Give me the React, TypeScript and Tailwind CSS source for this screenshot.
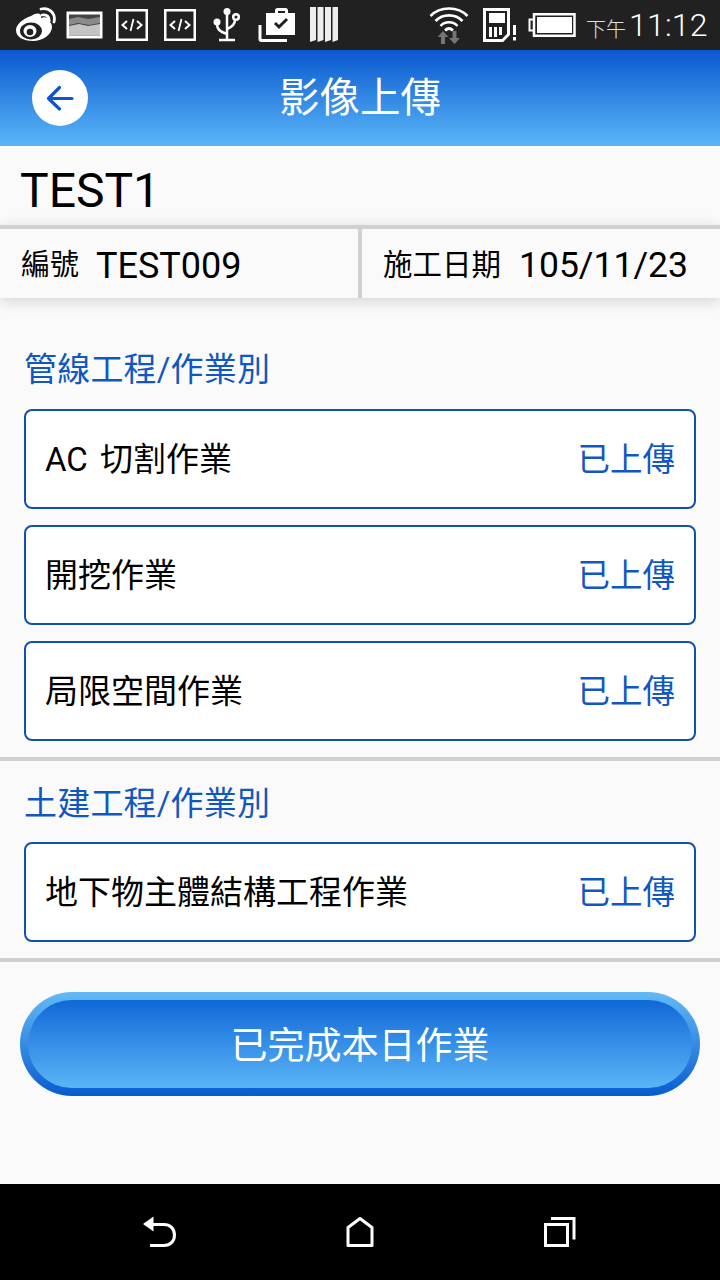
import React from "react";

const FONT = "font-['Roboto','Noto_Sans_CJK_TC',sans-serif]";

function CodeBox({ className = "" }: { className?: string }) {
  return (
    <svg width="32" height="32" viewBox="0 0 32 32" className={className} fill="none" stroke="#fff">
      <rect x="1.25" y="1.25" width="29.500" height="29.500" strokeWidth="2.500" />
      <path d="M11 12l-4.500 4 4.500 4M21 12l4.500 4-4.500 4" strokeWidth="2" />
      <path d="M17.500 10l-3 12" strokeWidth="1.800" />
    </svg>
  );
}

function Weibo() {
  return (
    <svg width="40" height="36" viewBox="0 0 40 36">
      <path d="M15 9C21 5 26 6 25 11c5-2 9 0 8 4 3 1 3 4 3 5 0 7-9 14-19 14C7 34 0 30 0 23 0 18 6 12 15 9z" fill="#fff" />
      <ellipse cx="15" cy="24" rx="11" ry="8.500" fill="#212121" />
      <ellipse cx="14" cy="24" rx="6.500" ry="6" fill="#fff" />
      <circle cx="14" cy="25" r="3.300" fill="#212121" />
      <path d="M26 8c5-1 8 2 7 7M25 2c9-2 15 5 13 13" fill="none" stroke="#fff" strokeWidth="2.800" strokeLinecap="round" />
    </svg>
  );
}

function StatusBar() {
  return (
    <div className="h-[50px] bg-[#212121] flex items-center shrink-0 pl-[16px]">
      <Weibo />
      <svg width="37" height="28" viewBox="0 0 37 28" className="ml-[10px]">
        <rect x="0.500" y="0.500" width="36" height="27" fill="#fff" />
        <rect x="3" y="3.500" width="31" height="21" fill="#444" />
        <path d="M3 8l9-2 10 2 12-2v6l-11 2-11-2-9 2z" fill="#8a8a8a" />
        <path d="M3 15l10-2 9 2 12-2v11.500H3z" fill="#c4c4c4" />
      </svg>
      <CodeBox className="ml-[13px]" />
      <CodeBox className="ml-[16px]" />
      <svg width="28" height="36" viewBox="0 0 28 36" className="ml-[17px]" fill="none" stroke="#fff" strokeWidth="2.500">
        <circle cx="14" cy="4.500" r="3.500" fill="#fff" stroke="none" />
        <path d="M14 6v27M6 33h16" />
        <circle cx="4" cy="15" r="3.500" fill="#fff" stroke="none" />
        <path d="M4 17c0 6 4 8 10 10" />
        <circle cx="23" cy="10" r="2.800" />
        <path d="M22 13c0 5-3 7-8 9" />
      </svg>
      <svg width="37" height="34" viewBox="0 0 37 34" className="ml-[17px]">
        <path d="M8 5h29v22H8z" fill="#fff" />
        <path d="M17 5V2.500C17 1 18 0 19.500 0h8C29 0 30 1 30 2.500V5h-3V3h-7v2z" fill="#fff" />
        <path d="M17 15l4 4 8-8" fill="none" stroke="#212121" strokeWidth="3" />
        <path d="M2 17v14c0 .8 .7 1.500 1.500 1.500H29" fill="none" stroke="#fff" strokeWidth="3" />
      </svg>
      <svg width="28" height="36" viewBox="0 0 28 36" className="ml-[15px]">
        <path d="M0 0h6v33l-6 2zM7.500 0h6v33l-6 2zM15 0h6v33l-6 2zM22.500 0h5.500v33l-5.500 2z" fill="#eee" />
      </svg>
      <svg width="40" height="40" viewBox="0 0 40 40" className="ml-[91px]" fill="none" stroke="#fff" strokeWidth="2.600">
        <path d="M1.500 11C11 1 29 1 38.500 11M6.500 16C13.500 8.500 26.500 8.500 33.500 16M11.500 21C16 16 24 16 28.500 21M16 25.500c2.500-2.500 5.500-2.500 8 0" />
        <path d="M14 26l5.500 6h-3.500v7h-4v-7H8.500zM25.500 39l-5.500-6h3.500v-7h4v7H31z" fill="#757575" stroke="none" />
      </svg>
      <svg width="34" height="34" viewBox="0 0 34 34" className="ml-[14px]">
        <path d="M1.500 1.500h24v25l-6 6h-18z" fill="none" stroke="#fff" strokeWidth="3" />
        <rect x="6" y="5" width="16" height="10" fill="#fff" />
        <path d="M6 19h3v10H6zM11 19h3v10h-3zM16 19h3v8h-3z" fill="#fff" />
        <path d="M30 17h3v10h-3zM30 29h3v3.500h-3z" fill="#fff" />
      </svg>
      <svg width="48" height="24" viewBox="0 0 48 24" className="ml-[11px]">
        <path d="M5.500 6.500H1.500v11h4" fill="none" stroke="#fff" strokeWidth="2" />
        <rect x="6" y="1.250" width="40.500" height="21.500" fill="none" stroke="#fff" strokeWidth="2.500" />
        <rect x="9" y="4" width="35" height="16" fill="#fff" />
      </svg>
      <div className="ml-[10px] flex items-end text-white leading-none">
        <span className="text-[20px] font-light text-[#e0e0e0] mb-[1px]">下午</span>
        <span className="text-[32px] font-light ml-[3px] tracking-[0.2px]">11:12</span>
      </div>
    </div>
  );
}

function Header() {
  return (
    <div className="h-[96px] shrink-0 bg-gradient-to-b from-[#0a58cf] to-[#5bb6f7] flex items-center pl-[32px]">
      <div className="w-[56px] h-[56px] rounded-full bg-white flex items-center justify-center">
        <svg width="28" height="28" viewBox="0 0 28 28" fill="none" stroke="#0f55c8" strokeWidth="3.200" strokeLinecap="round" strokeLinejoin="round">
          <path d="M26 14.500H3M13.500 3.500L2.500 14.500 13.500 25" />
        </svg>
      </div>
      <div className="flex-1 text-center pr-[88px] text-white text-[40.500px] leading-none">影像上傳</div>
    </div>
  );
}

function Row({ label }: { label: string }) {
  return (
    <div className="h-[100px] border-2 border-[#0f52ad] rounded-[8px] bg-white flex items-center justify-between px-[19px]">
      <span className="text-[33px] text-black leading-none [word-spacing:4px]">{label}</span>
      <span className="text-[32.500px] text-[#1058c0] leading-none pt-[2px]">已上傳</span>
    </div>
  );
}

export default function App() {
  return (
    <div className={`${FONT} w-[720px] h-[1280px] flex flex-col bg-[#fafafa] overflow-hidden`}>
      <StatusBar />
      <Header />
      <div className="h-[79px] shrink-0 flex items-center pl-[20px] pt-[11px] text-[48px] leading-none text-black">TEST1</div>
      <div className="h-[73px] shrink-0 border-t-4 border-[#d0d0d0] flex shadow-[0_3px_14px_rgba(0,0,0,0.16)] z-10 bg-[#fafafa]">
        <div className="w-[362px] flex items-center pl-[21px] pt-[4px] border-r-4 border-[#d0d0d0] text-black leading-none">
          <span className="text-[29px]">編號</span>
          <span className="text-[36px] ml-[17px]">TEST009</span>
        </div>
        <div className="flex-1 flex items-center pl-[21px] pt-[4px] text-black leading-none">
          <span className="text-[29.500px]">施工日期</span>
          <span className="text-[35.500px] ml-[18px]">105/11/23</span>
        </div>
      </div>
      <div className="px-[24px] pt-[55px] pb-[16px]">
        <div className="text-[33px] leading-none text-[#1058c0] mb-[23px] tracking-[0.2px]">管線工程/作業別</div>
        <div className="flex flex-col gap-[16px]">
          <Row label="AC 切割作業" />
          <Row label="開挖作業" />
          <Row label="局限空間作業" />
        </div>
      </div>
      <div className="h-[4px] shrink-0 bg-[#d0d0d0]" />
      <div className="px-[24px] pt-[26px] pb-[16px]">
        <div className="text-[33px] leading-none text-[#1058c0] mb-[22px] tracking-[0.2px]">土建工程/作業別</div>
        <Row label="地下物主體結構工程作業" />
      </div>
      <div className="h-[4px] shrink-0 bg-[#d0d0d0]" />
      <div className="flex-1 px-[20px] pt-[30px]">
        <div className="h-[104px] rounded-full p-[8px] bg-gradient-to-b from-[#62baf6] to-[#055ccf]">
          <div className="h-full rounded-full bg-gradient-to-b from-[#0e68d6] to-[#5ab5f6] flex items-center justify-center pt-[4px] text-white text-[37px] leading-none">
            已完成本日作業
          </div>
        </div>
      </div>
      <div className="h-[96px] shrink-0 bg-black flex items-center">
        <svg width="34" height="32" viewBox="0 0 34 32" className="ml-[143px]" fill="none" stroke="#fff" strokeWidth="3">
          <path d="M10 8.500h11c6 0 10.500 4 10.500 10.500s-4.500 10.500-10.500 10.500H7" />
          <path d="M10.500 0.500v15L0 8z" fill="#fff" stroke="none" />
        </svg>
        <svg width="30" height="32" viewBox="0 0 30 32" className="ml-[168px]" fill="none" stroke="#fff" strokeWidth="3" strokeLinejoin="round">
          <path d="M3 11.500L15 2.500l12 9v18H3z" />
        </svg>
        <svg width="33" height="32" viewBox="0 0 33 32" className="ml-[168px]" fill="none" stroke="#fff" strokeWidth="3">
          <rect x="2.500" y="8.500" width="22" height="21" />
          <path d="M8 2.500h23v21" />
        </svg>
      </div>
    </div>
  );
}
